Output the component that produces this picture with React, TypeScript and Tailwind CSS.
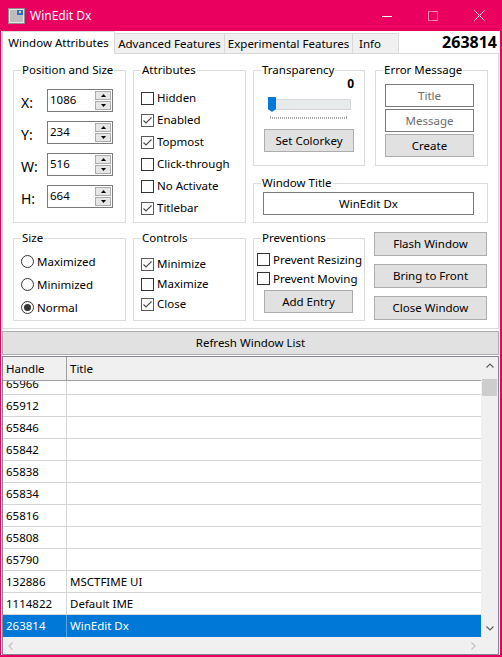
import React from "react";

function Check({ checked }: { checked?: boolean }) {
  return (
    <span
      className={
        checked
          ? "w-[13px] h-[13px] border border-[#5A5A5A] bg-white flex items-center justify-center shrink-0"
          : "w-[13px] h-[13px] border border-[#333333] bg-white flex items-center justify-center shrink-0"
      }
    >
      {checked && (
        <svg width="11" height="11" viewBox="0 0 11 11">
          <path d="M1.5 5.5 L4 8 L9.5 2.5" fill="none" stroke="#4A4A4A" strokeWidth="1.1" />
        </svg>
      )}
    </span>
  );
}

function Radio({ checked }: { checked?: boolean }) {
  return (
    <span className="w-[13px] h-[13px] rounded-full border border-[#333333] bg-white flex items-center justify-center shrink-0">
      {checked && <span className="w-[7px] h-[7px] rounded-full bg-[#333333]" />}
    </span>
  );
}

function Btn({ children, className }: { children: React.ReactNode; className?: string }) {
  return (
    <div
      className={`bg-[#E1E1E1] border border-[#ADADAD] flex items-center justify-center text-black ${className ?? ""}`}
    >
      {children}
    </div>
  );
}

function Group({
  title,
  className,
  children,
}: {
  title: string;
  className?: string;
  children?: React.ReactNode;
}) {
  return (
    <fieldset className={`border border-[#DCDCDC] min-w-0 ${className ?? ""}`}>
      <legend className="ml-[7px] px-[1px] leading-[14px]">{title}</legend>
      {children}
    </fieldset>
  );
}

function Tri({ up }: { up?: boolean }) {
  return (
    <svg width="5" height="3" viewBox="0 0 5 3">
      <path d={up ? "M0 3 L2.5 0 L5 3Z" : "M0 0 L2.5 3 L5 0Z"} fill="#000" />
    </svg>
  );
}

function Spin({ value }: { value: string }) {
  return (
    <div className="w-[66px] h-[23px] border border-[#7A7A7A] bg-white flex">
      <span className="flex-1 pl-[2px] pb-[2px] flex items-center">{value}</span>
      <div className="w-[17px] flex flex-col gap-[1px] py-[1px] pr-[1px]">
        <div className="flex-1 bg-[#E6E6E6] border border-[#ACACAC] flex items-center justify-center">
          <Tri up />
        </div>
        <div className="flex-1 bg-[#E6E6E6] border border-[#ACACAC] flex items-center justify-center">
          <Tri />
        </div>
      </div>
    </div>
  );
}

const rows: [string, string, boolean?][] = [
  ["65966", ""],
  ["65912", ""],
  ["65846", ""],
  ["65842", ""],
  ["65838", ""],
  ["65834", ""],
  ["65816", ""],
  ["65808", ""],
  ["65790", ""],
  ["132886", "MSCTFIME UI"],
  ["1114822", "Default IME"],
  ["263814", "WinEdit Dx", true],
];

export default function App() {
  return (
    <div className="w-[502px] h-[657px] bg-[#EA005E] flex flex-col text-[11.5px] text-black font-['Noto_Sans',sans-serif]">
      {/* Title bar */}
      <div className="h-[31px] flex items-center shrink-0">
        <div className="ml-[8px] w-[17px] h-[16px]">
          <svg width="17" height="16" viewBox="0 0 17 16">
            <rect x="0.5" y="0.5" width="16" height="15" fill="#E4E4E4" stroke="#8E8E8E" />
            <rect x="2" y="2" width="13" height="12" fill="#BDBDBD" />
            <rect x="9" y="2" width="6" height="5" fill="#2C6FCB" />
            <rect x="11" y="3" width="2" height="2" fill="#F2D36B" />
          </svg>
        </div>
        <span className="ml-[5px] text-white text-[12px]">WinEdit Dx</span>
        <div className="ml-auto flex h-full">
          <div className="w-[46px] flex items-center justify-center">
            <svg width="10" height="10" viewBox="0 0 10 10">
              <line x1="0" y1="5.5" x2="10" y2="5.5" stroke="#fff" strokeWidth="1" />
            </svg>
          </div>
          <div className="w-[46px] flex items-center justify-center">
            <svg width="10" height="10" viewBox="0 0 10 10">
              <rect x="0.5" y="0.5" width="9" height="9" fill="none" stroke="#F47FAA" strokeWidth="1" />
            </svg>
          </div>
          <div className="w-[46px] flex items-center justify-center">
            <svg width="11" height="11" viewBox="0 0 11 11">
              <path d="M0.5 0.5 L10.5 10.5 M10.5 0.5 L0.5 10.5" stroke="#fff" strokeWidth="1" />
            </svg>
          </div>
        </div>
      </div>

      {/* Body */}
      <div className="flex-1 flex flex-col pl-[1px] pr-[2px] pb-[2px]">
        <div className="flex-1 bg-white flex flex-col">
          {/* Tabs */}
          <div className="h-[22px] flex items-end pl-[1px] shrink-0">
            <div className="w-[113px] h-[23px] -mb-[1px] relative z-10 bg-white border border-b-0 border-[#D9D9D9] flex items-center justify-center">
              Window Attributes
            </div>
            <div className="w-[110px] h-[20px] bg-[#F0F0F0] border border-b-0 border-l-0 border-[#D9D9D9] flex items-center justify-center">
              Advanced Features
            </div>
            <div className="w-[128px] h-[20px] bg-[#F0F0F0] border border-b-0 border-l-0 border-[#D9D9D9] flex items-center justify-center">
              Experimental Features
            </div>
            <div className="w-[46px] h-[20px] bg-[#F0F0F0] border border-b-0 border-l-0 border-[#D9D9D9] flex items-center pl-[6px]">
              Info
            </div>
            <div className="ml-auto self-center pr-[3px] font-bold text-[16px] leading-none">263814</div>
          </div>

          {/* Panel */}
          <div className="mx-[1px] h-[276px] border border-[#D9D9D9] pt-[9px] pl-[10px] flex flex-col gap-[8px] shrink-0">
            {/* Row 1 */}
            <div className="flex gap-[7px] h-[160px]">
              <Group title="Position and Size" className="w-[113px] h-[160px]">
                <div className="pt-[12px] pl-[7px] flex flex-col gap-[9px]">
                  {[
                    ["X:", "1086"],
                    ["Y:", "234"],
                    ["W:", "516"],
                    ["H:", "664"],
                  ].map(([l, v]) => (
                    <div key={l} className="flex items-center h-[23px]">
                      <span className="w-[26px] text-[14px] pt-[3px]">{l}</span>
                      <Spin value={v} />
                    </div>
                  ))}
                </div>
              </Group>
              <Group title="Attributes" className="w-[113px] h-[160px]">
                <div className="pt-[10px] pl-[7px] flex flex-col">
                  {(
                    [
                      ["Hidden", false],
                      ["Enabled", true],
                      ["Topmost", true],
                      ["Click-through", false],
                      ["No Activate", false],
                      ["Titlebar", true],
                    ] as [string, boolean][]
                  ).map(([l, c]) => (
                    <div key={l} className="h-[22px] flex items-center gap-[3px]">
                      <Check checked={c} />
                      <span>{l}</span>
                    </div>
                  ))}
                </div>
              </Group>
              <div className="w-[235px] flex flex-col gap-[10px]">
                <div className="flex gap-[10px] h-[103px]">
                  <Group title="Transparency" className="w-[112px] h-[103px]">
                    <div className="px-[10px] flex flex-col">
                      <div className="h-[14px] leading-[14px] text-right font-bold text-[12px]">0</div>
                      <svg className="mt-[5px]" width="90" height="24" viewBox="0 0 90 24">
                        <rect x="4.5" y="3.5" width="82" height="10" fill="#E7EAEA" stroke="#D6D6D6" />
                        <path d="M4 1 H12 V13 L8 16 L4 13 Z" fill="#0078D7" />
                        <line x1="6" y1="22" x2="83" y2="22" stroke="#A8A8A8" strokeWidth="2" strokeDasharray="1 1" />
                        <line x1="6.5" y1="20" x2="6.5" y2="23" stroke="#A8A8A8" strokeWidth="1" />
                        <line x1="82.5" y1="20" x2="82.5" y2="23" stroke="#A8A8A8" strokeWidth="1" />
                      </svg>
                      <Btn className="mt-[9px] h-[23px]">Set Colorkey</Btn>
                    </div>
                  </Group>
                  <Group title="Error Message" className="w-[113px] h-[103px]">
                    <div className="pl-[9px] pt-[7px] flex flex-col gap-[2px]">
                      <div className="w-[89px] h-[23px] border border-[#7A7A7A] flex items-center justify-center text-[#6D6D6D]">
                        Title
                      </div>
                      <div className="w-[89px] h-[23px] border border-[#7A7A7A] flex items-center justify-center text-[#6D6D6D]">
                        Message
                      </div>
                      <Btn className="w-[89px] h-[23px]">Create</Btn>
                    </div>
                  </Group>
                </div>
                <Group title="Window Title" className="w-[235px] h-[47px]">
                  <div className="pl-[9px] pt-[2px]">
                    <div className="w-[211px] h-[23px] border border-[#7A7A7A] flex items-center justify-center">
                      WinEdit Dx
                    </div>
                  </div>
                </Group>
              </div>
            </div>

            {/* Row 2 */}
            <div className="flex gap-[7px] h-[90px]">
              <Group title="Size" className="w-[113px] h-[90px]">
                <div className="pt-[5px] pl-[7px] flex flex-col">
                  {(
                    [
                      ["Maximized", false],
                      ["Minimized", false],
                      ["Normal", true],
                    ] as [string, boolean][]
                  ).map(([l, c]) => (
                    <div key={l} className="h-[23px] flex items-center gap-[3px]">
                      <Radio checked={c} />
                      <span>{l}</span>
                    </div>
                  ))}
                </div>
              </Group>
              <Group title="Controls" className="w-[113px] h-[90px]">
                <div className="pt-[9px] pl-[7px] flex flex-col">
                  {(
                    [
                      ["Minimize", true],
                      ["Maximize", false],
                      ["Close", true],
                    ] as [string, boolean][]
                  ).map(([l, c]) => (
                    <div key={l} className="h-[20px] flex items-center gap-[3px]">
                      <Check checked={c} />
                      <span>{l}</span>
                    </div>
                  ))}
                </div>
              </Group>
              <Group title="Preventions" className="w-[112px] h-[90px]">
                <div className="pt-[5px] pl-[3px] flex flex-col">
                  {["Prevent Resizing", "Prevent Moving"].map((l) => (
                    <div key={l} className="h-[19px] flex items-center gap-[3px]">
                      <Check />
                      <span>{l}</span>
                    </div>
                  ))}
                  <Btn className="ml-[7px] mt-[2px] w-[89px] h-[23px]">Add Entry</Btn>
                </div>
              </Group>
              <div className="ml-[2px] w-[113px] flex flex-col gap-[8px] pt-[1px]">
                <Btn className="h-[24px]">Flash Window</Btn>
                <Btn className="h-[24px]">Bring to Front</Btn>
                <Btn className="h-[24px]">Close Window</Btn>
              </div>
            </div>
          </div>

          {/* Refresh */}
          <Btn className="mx-[1px] mt-[2px] h-[24px] shrink-0">Refresh Window List</Btn>

          {/* List */}
          <div className="mx-[1px] mt-[1px] h-[299px] border border-[#828790] flex flex-col shrink-0">
            <div className="flex h-[280px]">
              <div className="flex-1 flex flex-col min-w-0">
                <div className="h-[24px] bg-[#F0F0F0] border-b border-[#A0A0A0] flex shrink-0">
                  <div className="w-[64px] border-r border-[#A0A0A0] pl-[3px] flex items-center">Handle</div>
                  <div className="flex-1 pl-[3px] flex items-center">Title</div>
                </div>
                <div className="h-[256px] overflow-hidden">
                  <div className="-mt-[8px] flex flex-col">
                    {rows.map(([h, t, sel]) => (
                      <div
                        key={h}
                        className={
                          sel
                            ? "h-[22px] flex bg-[#0078D7] text-white shrink-0"
                            : "h-[22px] flex border-b border-[#D5D5D5] shrink-0"
                        }
                      >
                        <div
                          className={
                            sel
                              ? "w-[64px] border-r border-[#5AA5E6] pl-[3px] flex items-center"
                              : "w-[64px] border-r border-[#D5D5D5] pl-[3px] flex items-center"
                          }
                        >
                          {h}
                        </div>
                        <div className="flex-1 pl-[3px] flex items-center">{t}</div>
                      </div>
                    ))}
                  </div>
                </div>
              </div>
              <div className="w-[17px] bg-[#F0F0F0] flex flex-col shrink-0">
                <div className="h-[17px] flex items-center justify-center">
                  <svg width="8" height="5" viewBox="0 0 8 5">
                    <path d="M0.5 4.5 L4 1 L7.5 4.5" fill="none" stroke="#606060" strokeWidth="1.2" />
                  </svg>
                </div>
                <div className="mt-[5px] mx-[1px] h-[17px] bg-[#CDCDCD]" />
                <div className="flex-1" />
                <div className="h-[17px] flex items-center justify-center">
                  <svg width="8" height="5" viewBox="0 0 8 5">
                    <path d="M0.5 0.5 L4 4 L7.5 0.5" fill="none" stroke="#606060" strokeWidth="1.2" />
                  </svg>
                </div>
              </div>
            </div>
            <div className="flex h-[17px]">
              <div className="flex-1 bg-[#F0F0F0] flex items-center justify-between px-[5px]">
                <svg width="5" height="8" viewBox="0 0 5 8">
                  <path d="M4.5 0.5 L1 4 L4.5 7.5" fill="none" stroke="#C2C2C2" strokeWidth="1.2" />
                </svg>
                <svg width="5" height="8" viewBox="0 0 5 8">
                  <path d="M0.5 0.5 L4 4 L0.5 7.5" fill="none" stroke="#C2C2C2" strokeWidth="1.2" />
                </svg>
              </div>
              <div className="w-[17px] bg-[#F0F0F0]" />
            </div>
          </div>
        </div>
      </div>
    </div>
  );
}
